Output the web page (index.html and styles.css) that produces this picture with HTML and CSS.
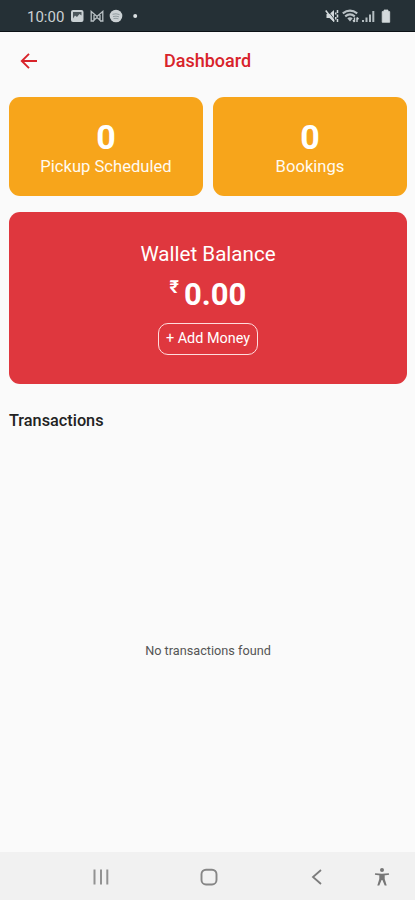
FILE: index.html
```html
<!DOCTYPE html>
<html lang="en">
<head>
<meta charset="utf-8">
<title>Dashboard</title>
<link rel="stylesheet" href="styles.css">
</head>
<body>
<div class="screen">
  <div class="status">
    <span class="time">10:00</span>
    <svg class="status-left" width="72" height="16" viewBox="0 0 72 16">
      <rect x="1" y="2" width="12.500" height="12" rx="2" fill="#c9d0d3"/>
      <path d="M3 10.500V4h8.500v3.500L9.500 6 7 9 5 7.500z" fill="#4b565b"/>
      <path d="M21.200 13V3.500l5.800 5 5.800-5V13M24 13V7M30 13V7M20.500 13H24M30 13h3.500M24 12l3-2.500 3 2.500" fill="none" stroke="#b9c1c5" stroke-width="1.300"/>
      <circle cx="46" cy="8" r="6.300" fill="#cbd1d4"/>
      <path d="M42.500 6.300q3.500-1.200 7 .3M43 8.600q3-1 6 .2M43.500 10.600q2.500-.7 5 .2" fill="none" stroke="#8b969b" stroke-width=".9"/>
      <circle cx="65.200" cy="8" r="2" fill="#dce1e3"/>
    </svg>
    <svg class="status-right" width="68" height="16" viewBox="0 0 68 16">
      <path d="M1.500 6h3l4.500-4v12l-4.500-4h-3z" fill="#d3d9dc"/>
      <path d="M2.300 2l7 9" stroke="#253036" stroke-width=".8"/>
      <path d="M.7 2.500l8.500 11M12.500 2v3M12.500 6.500v3M12.500 11v3M10.700 4.500v2M10.700 9v2.500" fill="none" stroke="#d3d9dc" stroke-width="1.500"/>
      <path d="M17.800 5.300q7.200-5.500 14.400 0M20.200 8.300q4.800-3.800 9.600 0" fill="none" stroke="#b9c1c5" stroke-width="2.200"/>
      <path d="M22.300 10.200q2.700-1.800 5.400 0L25 13.500z" fill="#b9c1c5"/>
      <path d="M29.500 14V9.500M28 12.200l1.500 1.800M32 9.500V14M32 9.500l1.500 1.800" fill="none" stroke="#c9d0d3" stroke-width="1.400"/>
      <path d="M38 14v-2M41.500 14v-4.500M45 14V6.500M48.300 14V3" stroke="#b3bcc0" stroke-width="2"/>
      <path d="M59 2h4v1.600h1.700v10.700h-7.500V3.600H59z" fill="#d3d9dc" stroke="#d3d9dc" stroke-width=".8" stroke-linejoin="round"/>
    </svg>
  </div>
  <header class="header">
    <svg class="back" width="18" height="18" viewBox="0 0 18 18"><path d="M17 9H2M9 1.800L1.800 9 9 16.200" fill="none" stroke="#d8232a" stroke-width="1.900"/></svg>
    <h1 class="title">Dashboard</h1>
  </header>
  <main class="content">
    <div class="stats">
      <div class="stat"><div class="count">0</div><div class="label">Pickup Scheduled</div></div>
      <div class="stat"><div class="count">0</div><div class="label">Bookings</div></div>
    </div>
    <section class="wallet">
      <div class="wallet-title">Wallet Balance</div>
      <div class="amount"><span class="currency">₹</span><span class="value">0.00</span></div>
      <button class="add">+ Add Money</button>
    </section>
    <h2 class="section-title">Transactions</h2>
    <div class="empty">No transactions found</div>
  </main>
  <nav class="nav">
    <svg class="recents" width="18" height="18" viewBox="0 0 18 18"><path d="M2.500 1.500v15M9 1.500v15M15.300 1.500v15" stroke="#929292" stroke-width="2"/></svg>
    <svg class="home" width="18" height="18" viewBox="0 0 18 18"><rect x="1.500" y="1.700" width="15" height="14.800" rx="4.500" fill="none" stroke="#868686" stroke-width="1.900"/></svg>
    <svg class="prev" width="18" height="18" viewBox="0 0 18 18"><path d="M13 2L5 9l8 7" fill="none" stroke="#7c7c7c" stroke-width="1.800"/></svg>
    <svg class="access" width="18" height="20" viewBox="0 0 18 20"><circle cx="9" cy="3" r="2" fill="#777"/><path d="M2 7q7 1 14 0" fill="none" stroke="#777" stroke-width="1.700"/><path d="M6.300 7h5.400v5l2 6.500h-2L9.400 13h-.8l-2.300 5.500h-2l2-6.500z" fill="#777"/></svg>
  </nav>
</div>
</body>
</html>
```
FILE: styles.css
```css
* { box-sizing: border-box; }
body { margin: 0; font-family: Roboto, "Liberation Sans", sans-serif; }
.screen { width: 415px; height: 900px; display: flex; flex-direction: column; background: #fafafa; }
.status { height: 32px; flex: none; display: flex; align-items: center; padding: 1px 22px 0 27px; background: #253036; border-bottom: 1px solid #0b1115; color: #cbd1d4; }
.time { font-size: 15px; line-height: 18px; width: 37px; padding-top: 2px; white-space: nowrap; }
.status-left { margin-left: 6px; }
.status-right { margin-left: auto; }
.header { height: 65px; flex: none; display: grid; grid-template-columns: 1fr auto 1fr; align-items: center; padding: 0 20px 7px; }
.header::after { content: ""; width: 20px; }
.title { margin: 0; font-size: 18px; line-height: 22px; font-weight: 500; color: #d8232a; }
.content { flex: 1; display: flex; flex-direction: column; padding: 0 8px 0 9px; }
.stats { display: grid; grid-template-columns: 1fr 1fr; gap: 10px; }
.stat { height: 98.5px; border-radius: 11px; background: #f7a51b; color: #fffaf0; text-align: center; padding-top: 21px; }
.count { font-size: 34px; line-height: 39px; font-weight: 700; color: #fff; }
.label { font-size: 16.6px; line-height: 20px; }
.wallet { margin-top: 16.5px; height: 172px; border-radius: 11px; background: #df373e; color: #fff; display: flex; flex-direction: column; align-items: center; padding-top: 30px; }
.wallet-title { font-size: 20.6px; line-height: 24px; }
.amount { display: flex; align-items: flex-start; gap: 5px; height: 40px; margin-top: 8px; }
.currency { font-size: 18px; line-height: 20px; font-weight: 700; margin-top: 3px; }
.value { font-size: 31px; line-height: 42px; font-weight: 700; }
.add { margin: 9px 0 0; width: 100px; height: 32px; border: 1px solid #ffdcdd; border-radius: 10px; padding: 0 0 1px; background: none; color: #fff; font: 14.4px/18px Roboto, sans-serif; white-space: nowrap; }
.section-title { margin: 27px 0 0; font-size: 16.3px; line-height: 20px; font-weight: 500; color: #222; }
.empty { flex: 1; display: flex; justify-content: center; align-items: flex-start; padding-top: 212px; font-size: 12.7px; line-height: 16px; color: #555; }
.nav { height: 48px; flex: none; display: flex; align-items: center; background: #f1f1f1; padding: 2px 24px 0 92px; }
.home { margin-left: 90px; }
.prev { margin-left: 90px; }
.access { margin-left: auto; }
```
